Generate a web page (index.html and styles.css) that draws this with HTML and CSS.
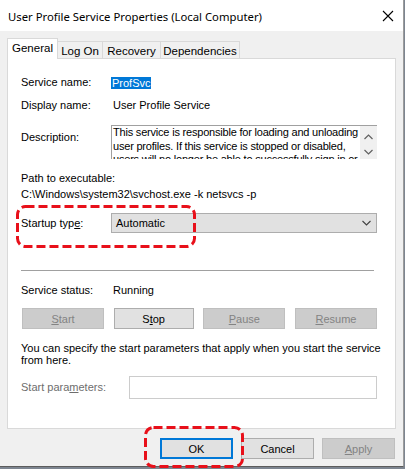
FILE: index.html
```html
<!DOCTYPE html>
<html>
<head>
<meta charset="utf-8">
<link rel="stylesheet" href="styles.css">
</head>
<body>
<div class="desk">
  <div class="window">
    <div class="titlebar">
      <span class="title">User Profile Service Properties (Local Computer)</span>
      <svg class="close" width="12" height="12" viewBox="0 0 12 12"><path d="M1 1 L11 11 M11 1 L1 11" stroke="#000" stroke-width="1.1" fill="none"/></svg>
    </div>
    <div class="content">
      <div class="tabs">
        <div class="tab tab-general active">General</div>
        <div class="tab tab-logon">Log On</div>
        <div class="tab tab-recovery">Recovery</div>
        <div class="tab tab-deps">Dependencies</div>
      </div>
      <div class="panel">
        <div class="row row-name"><span class="label">Service name:</span><span class="sel">ProfSvc</span></div>
        <div class="row row-display"><span class="label">Display name:</span><span class="value">User Profile Service</span></div>
        <div class="row row-desc">
          <span class="label label-desc">Description:</span>
          <div class="descbox">
            <div class="desctext">This service is responsible for loading and unloading user profiles. If this service is stopped or disabled, users will no longer be able to successfully sign in or access their user profiles.</div>
            <div class="scroll">
              <svg width="9" height="6" viewBox="0 0 9 6"><path d="M0.5 5 L4.5 1 L8.5 5" stroke="#606060" stroke-width="1.2" fill="none"/></svg>
              <svg width="9" height="6" viewBox="0 0 9 6"><path d="M0.5 1 L4.5 5 L8.5 1" stroke="#606060" stroke-width="1.2" fill="none"/></svg>
            </div>
          </div>
        </div>
        <div class="row row-path"><span class="label">Path to executable:</span></div>
        <div class="row row-pathval"><span class="label">C:\Windows\system32\svchost.exe -k netsvcs -p</span></div>
        <div class="row row-startup">
          <span class="label">Startup typ<u>e</u>:</span>
          <div class="combo"><span>Automatic</span>
            <svg width="9" height="6" viewBox="0 0 9 6"><path d="M0.5 1 L4.5 5 L8.5 1" stroke="#404040" stroke-width="1.1" fill="none"/></svg>
          </div>
        </div>
        <div class="sep"></div>
        <div class="row row-status"><span class="label">Service status:</span><span class="value">Running</span></div>
        <div class="btnrow">
          <div class="btn disabled"><u>S</u>tart</div>
          <div class="btn">S<u>t</u>op</div>
          <div class="btn disabled"><u>P</u>ause</div>
          <div class="btn disabled"><u>R</u>esume</div>
        </div>
        <p class="para">You can specify the start parameters that apply when you start the service from here.</p>
        <div class="row row-params">
          <span class="label label-dis">Start para<u>m</u>eters:</span>
          <div class="input"></div>
        </div>
      </div>
      <div class="footer">
        <div class="btn fbtn default">OK</div>
        <div class="btn fbtn">Cancel</div>
        <div class="btn fbtn disabled"><u>A</u>pply</div>
      </div>
    </div>
    <svg class="mark mark-startup" width="180" height="43" viewBox="0 0 180 43"><rect x="1.5" y="1.5" width="177" height="40" rx="8" ry="8" fill="none" stroke="#e8101a" stroke-width="3" stroke-dasharray="9 4"/></svg>
    <svg class="mark mark-ok" width="100" height="43" viewBox="0 0 100 43"><rect x="1.5" y="1.5" width="97" height="39" rx="8" ry="8" fill="none" stroke="#e8101a" stroke-width="3" stroke-dasharray="9 4"/></svg>
  </div>
</div>
</body>
</html>
```

FILE: styles.css
```css
* { box-sizing: border-box; }
html, body { margin: 0; padding: 0; }
body {
  width: 405px;
  height: 469px;
  overflow: hidden;
  background: #8a8a8a;
  font-family: "Liberation Sans", Arial, sans-serif;
  font-size: 11px;
  color: #000;
}
.desk {
  width: 405px;
  height: 469px;
  background: #7d8590;
}
.window {
  position: relative;
  width: 404px;
  height: 467px;
  background: #f0f0f0;
  border-right: 1px solid #9c9c9c;
  border-bottom: 1px solid #5c5c5c;
  display: flex;
  flex-direction: column;
}
.titlebar {
  height: 31px;
  background: #fff;
  display: flex;
  align-items: center;
  justify-content: space-between;
  padding: 0 8px 0 8px;
}
.title {
  font-family: "Noto Sans", "Open Sans", sans-serif;
  font-size: 11.3px;
  color: #000;
  padding-top: 1px;
}
.close { margin-right: 1px; margin-top: 0; }
.content {
  padding: 7px 7px 0 7px;
  display: flex;
  flex-direction: column;
}
.tabs {
  display: flex;
  align-items: flex-end;
  height: 20px;
}
.tab {
  height: 17px;
  border: 1px solid #d9d9d9;
  border-bottom: none;
  border-left: none;
  background: #f0f0f0;
  display: flex;
  align-items: center;
  justify-content: center;
  font-size: 11.5px;
  padding-top: 1px;
}
.tab.active {
  height: 21px;
  margin-bottom: -1px;
  background: #fff;
  border-left: 1px solid #d9d9d9;
  position: relative;
  z-index: 1;
  align-items: flex-start;
  padding-top: 3px;
}
.tab-general { width: 51px; }
.tab-logon { width: 45px; }
.tab-recovery { width: 58px; }
.tab-deps { width: 79px; }
.panel {
  width: 389px;
  height: 371px;
  background: #fff;
  border: 1px solid #d9d9d9;
  padding: 0 18px 0 13px;
  display: flex;
  flex-direction: column;
}
.row {
  display: flex;
  align-items: center;
  line-height: 13px;
  height: 13px;
}
.label { width: 90px; flex: none; white-space: nowrap; }
.value { white-space: nowrap; padding-left: 2px; }
.row-name { margin-top: 17px; }
.sel {
  background: #0078d7;
  color: #fff;
  height: 12px;
  line-height: 12px;
  padding: 0 1px;
  width: 40px;
}
.row-display { margin-top: 10px; }
.row-desc {
  margin-top: 13px;
  height: 34px;
  align-items: flex-start;
}
.label-desc { margin-top: 6px; }
.descbox {
  width: 266px;
  height: 34px;
  border-top: 1px solid #a0a0a0;
  border-left: 1px solid #a0a0a0;
  display: flex;
  overflow: hidden;
}
.desctext {
  flex: 1;
  padding: 0 0 0 1px;
  line-height: 13.5px;
  font-size: 11px;
  letter-spacing: -0.2px;
}
.scroll {
  width: 17px;
  flex: none;
  background: #f0f0f0;
  display: flex;
  flex-direction: column;
  align-items: center;
  gap: 9px;
  padding-top: 8px;
}
.scroll svg { display: block; }
.row-path { margin-top: 13px; }
.row-path .label, .row-pathval .label { width: auto; }
.row-pathval { margin-top: 3px; }
.row-startup { margin-top: 12px; height: 20px; }
.combo {
  width: 266px;
  height: 20px;
  background: #e1e1e1;
  border: 1px solid #adadad;
  display: flex;
  align-items: center;
  justify-content: space-between;
  padding: 0 5px 0 4px;
}
.sep {
  margin-top: 37px;
  width: 353px;
  height: 1px;
  background: #a0a0a0;
}
.row-status { margin-top: 13px; }
.btnrow {
  margin-top: 11px;
  display: flex;
  justify-content: space-between;
  width: 356px;
  padding-left: 1px;
}
.btn {
  height: 21px;
  width: 82px;
  background: #e1e1e1;
  border: 1px solid #adadad;
  display: flex;
  align-items: center;
  justify-content: center;
  padding-top: 1px;
}
.btnrow .btn:nth-child(2) { width: 80px; }
.btn.disabled {
  background: #cccccc;
  border-color: #bfbfbf;
  color: #838383;
}
.para {
  margin: 13px 0 0 0;
  line-height: 12px;
  width: 360px;
}
.row-params { margin-top: 10px; height: 23px; }
.label-dis { color: #6d6d6d; width: 108px; }
.input {
  width: 248px;
  height: 23px;
  border: 1px solid #cccccc;
  background: #fff;
}
.footer {
  display: flex;
  justify-content: flex-end;
  gap: 8px;
  margin-top: 9px;
  padding-right: 1px;
}
.fbtn { width: 73px; }
.fbtn.default {
  border: 2px solid #0078d7;
}
.mark { position: absolute; }
.mark-startup { left: 16px; top: 205px; }
.mark-ok { left: 144px; top: 426px; }
```
